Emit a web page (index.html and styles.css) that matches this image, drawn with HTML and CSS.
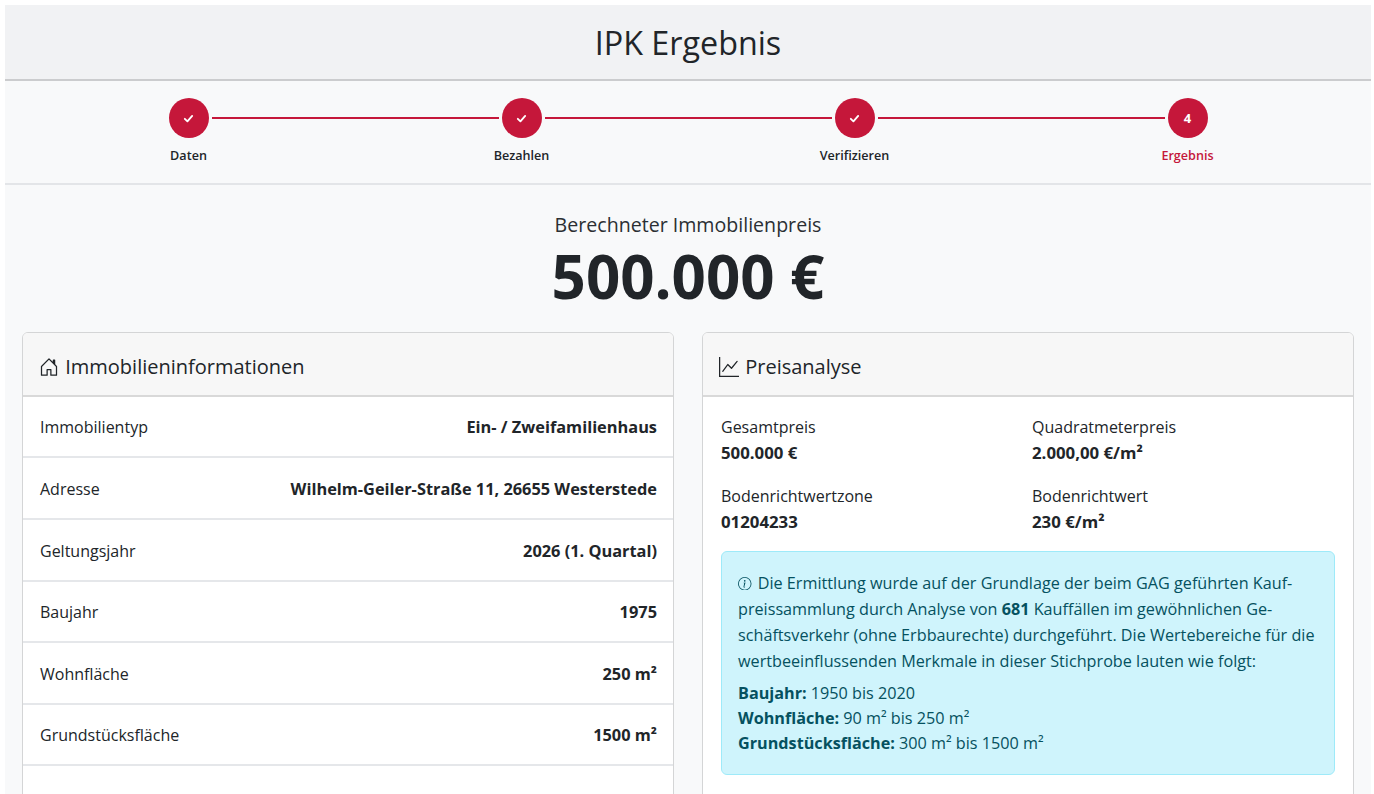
FILE: index.html
```html
<!DOCTYPE html>
<html lang="de">
<head>
<meta charset="utf-8">
<title>IPK Ergebnis</title>
<link rel="stylesheet" href="styles.css">
</head>
<body>
<div class="page">
  <header class="topbar">
    <h1 class="topbar-title">IPK Ergebnis</h1>
  </header>

  <nav class="stepper">
    <ol class="steps">
      <li class="step step-done">
        <span class="step-dot"><svg class="check" viewBox="0 0 12 12"><polyline points="2.6,6.3 5,8.6 9.4,3.6"/></svg></span>
        <span class="step-label">Daten</span>
      </li>
      <li class="step step-done">
        <span class="step-dot"><svg class="check" viewBox="0 0 12 12"><polyline points="2.6,6.3 5,8.6 9.4,3.6"/></svg></span>
        <span class="step-label">Bezahlen</span>
      </li>
      <li class="step step-done">
        <span class="step-dot"><svg class="check" viewBox="0 0 12 12"><polyline points="2.6,6.3 5,8.6 9.4,3.6"/></svg></span>
        <span class="step-label">Verifizieren</span>
      </li>
      <li class="step step-current">
        <span class="step-dot">4</span>
        <span class="step-label">Ergebnis</span>
      </li>
    </ol>
  </nav>

  <main class="content">
    <section class="result">
      <p class="result-label">Berechneter Immobilienpreis</p>
      <p class="result-value">500.000 €</p>
    </section>

    <div class="cards">
      <section class="card">
        <h2 class="card-header"><svg class="icon" viewBox="0 0 16 16"><path d="M8.354 1.146a.5.5 0 0 0-.708 0l-6 6A.5.5 0 0 0 1.5 7.5v7a.5.5 0 0 0 .5.5h4.5a.5.5 0 0 0 .5-.5v-4h2v4a.5.5 0 0 0 .5.5H14a.5.5 0 0 0 .5-.5v-7a.5.5 0 0 0-.146-.354L13 5.793V2.5a.5.5 0 0 0-.5-.5h-1a.5.5 0 0 0-.5.5v1.293zM2.5 14V7.707l5.5-5.5 5.5 5.5V14H10v-4a.5.5 0 0 0-.5-.5h-3a.5.5 0 0 0-.5.5v4z"/></svg> Immobilieninformationen</h2>
        <ul class="info-list">
          <li class="info-row"><span class="info-key">Immobilientyp</span><span class="info-value">Ein- / Zweifamilienhaus</span></li>
          <li class="info-row"><span class="info-key">Adresse</span><span class="info-value">Wilhelm-Geiler-Straße 11, 26655 Westerstede</span></li>
          <li class="info-row"><span class="info-key">Geltungsjahr</span><span class="info-value">2026 (1. Quartal)</span></li>
          <li class="info-row"><span class="info-key">Baujahr</span><span class="info-value">1975</span></li>
          <li class="info-row"><span class="info-key">Wohnfläche</span><span class="info-value">250 m²</span></li>
          <li class="info-row"><span class="info-key">Grundstücksfläche</span><span class="info-value">1500 m²</span></li>
          <li class="info-row info-row-empty"></li>
        </ul>
      </section>

      <section class="card">
        <h2 class="card-header"><svg class="icon" viewBox="0 0 16 16"><path fill-rule="evenodd" d="M0 0h1v15h15v1H0zm14.817 3.113a.5.5 0 0 1 .07.704l-4.5 5.5a.5.5 0 0 1-.74.037L7.060 6.767l-3.656 5.027a.5.5 0 0 1-.808-.588l4-5.5a.5.5 0 0 1 .758-.06l2.609 2.61 4.150-5.073a.5.5 0 0 1 .704-.07"/></svg> Preisanalyse</h2>
        <div class="card-body">
          <dl class="stats">
            <div class="stat"><dt class="stat-key">Gesamtpreis</dt><dd class="stat-value">500.000 €</dd></div>
            <div class="stat"><dt class="stat-key">Quadratmeterpreis</dt><dd class="stat-value">2.000,00 €/m²</dd></div>
            <div class="stat"><dt class="stat-key">Bodenrichtwertzone</dt><dd class="stat-value">01204233</dd></div>
            <div class="stat"><dt class="stat-key">Bodenrichtwert</dt><dd class="stat-value">230 €/m²</dd></div>
          </dl>

          <div class="alert">
            <p class="alert-text">
              <span class="alert-line"><svg class="info-icon" viewBox="0 0 16 16"><path d="M8 15A7 7 0 1 1 8 1a7 7 0 0 1 0 14m0 1A8 8 0 1 0 8 0a8 8 0 0 0 0 16"/><path d="m8.93 6.588-2.29.287-.082.38.45.083c.294.07.352.176.288.469l-.738 3.468c-.194.897.105 1.319.808 1.319.545 0 .943-.252 1.128-.598l.088-.416c-.2.176-.492.246-.686.246-.275 0-.375-.193-.304-.533zM9 4.5a1 1 0 1 1-2 0 1 1 0 0 1 2 0"/></svg> Die Ermittlung wurde auf der Grundlage der beim GAG geführten Kauf-</span>
              <span class="alert-line">preissammlung durch Analyse von <strong>681</strong> Kauffällen im gewöhnlichen Ge-</span>
              <span class="alert-line">schäftsverkehr (ohne Erbbaurechte) durchgeführt. Die Wertebereiche für die</span>
              <span class="alert-line">wertbeeinflussenden Merkmale in dieser Stichprobe lauten wie folgt:</span>
            </p>
            <ul class="ranges">
              <li><strong>Baujahr:</strong> 1950 bis 2020</li>
              <li><strong>Wohnfläche:</strong> 90 m² bis 250 m²</li>
              <li><strong>Grundstücksfläche:</strong> 300 m² bis 1500 m²</li>
            </ul>
          </div>
        </div>
      </section>
    </div>
  </main>
</div>
</body>
</html>
```

FILE: styles.css
```css
* { box-sizing: border-box; }

html, body {
  margin: 0;
  padding: 0;
  background: #ffffff;
}

body {
  font-family: "Open Sans", "Noto Sans", sans-serif;
  color: #212529;
  font-size: 16px;
}

.page {
  margin: 5px 3px 0 5px;
  background: #f8f9fa;
  min-height: 900px;
}

/* Header */
.topbar {
  background: #f1f2f4;
  border-bottom: 2px solid #cbccce;
  padding: 18px 0 17.6px;
  text-align: center;
}

.topbar-title {
  margin: 0;
  font-size: 32.3px;
  font-weight: 400;
  line-height: 38.4px;
  color: #212529;
}

/* Stepper */
.stepper {
  background: #f8f9fa;
  border-bottom: 2px solid #e3e5e8;
  padding: 17px 17px 18.4px;
}

.steps {
  list-style: none;
  margin: 0;
  padding: 0;
  display: grid;
  grid-template-columns: repeat(4, 1fr);
}

.step {
  position: relative;
  display: flex;
  flex-direction: column;
  align-items: center;
}

.step:not(:last-child)::after {
  content: "";
  position: absolute;
  top: 19px;
  left: calc(50% + 23px);
  right: calc(-50% + 23px);
  height: 2px;
  background: #c5173a;
}

.step-dot {
  width: 40px;
  height: 40px;
  border-radius: 50%;
  background: #c5173a;
  color: #ffffff;
  display: flex;
  align-items: center;
  justify-content: center;
  font-size: 13px;
  font-weight: 700;
}

.check {
  width: 13px;
  height: 13px;
  fill: none;
  stroke: #ffffff;
  stroke-width: 1.7;
  stroke-linecap: round;
  stroke-linejoin: round;
}

.step-label {
  margin-top: 8.6px;
  font-size: 12.6px;
  line-height: 18px;
  font-weight: 600;
  color: #212529;
}

.step-current .step-label {
  color: #c5173a;
}

/* Content */
.content {
  padding: 0 17px;
}

.result {
  text-align: center;
  padding-top: 24.8px;
}

.result-label {
  margin: 0;
  font-size: 19.6px;
  line-height: 29.4px;
  color: #2b2f33;
}

.result-value {
  margin: 1.6px 0 0;
  font-size: 60px;
  line-height: 70px;
  font-weight: 700;
  color: #212529;
}

.cards {
  margin-top: 21px;
  display: grid;
  grid-template-columns: 1fr 1fr;
  column-gap: 28px;
}

.card {
  background: #ffffff;
  border: 1px solid #d4d5d6;
  border-radius: 6px;
  overflow: hidden;
}

.card-header {
  margin: 0;
  background: #f7f7f7;
  border-bottom: 2px solid #d9d9d9;
  padding: 19px 16px 13px;
  font-size: 20px;
  line-height: 30px;
  font-weight: 400;
  color: #212529;
}

.icon {
  width: 20px;
  height: 20px;
  fill: #212529;
  vertical-align: -0.15em;
  margin-right: 1px;
}

/* Info list */
.info-list {
  list-style: none;
  margin: 0;
  padding: 0;
}

.info-row {
  display: flex;
  justify-content: space-between;
  align-items: baseline;
  padding: 18.6px 16px 17px 17px;
  line-height: 24px;
  border-bottom: 2px solid #e5e7ea;
  min-height: 61.6px;
}

.info-value {
  font-weight: 700;
  font-size: 16.35px;
}

/* Price analysis */
.card-body {
  padding: 17.8px 18px 18px;
}

.stats {
  margin: 0;
  display: grid;
  grid-template-columns: 1fr 1fr;
  column-gap: 8px;
  row-gap: 19px;
  line-height: 25px;
}

.stat-key {
  font-weight: 400;
}

.stat-value {
  margin: 0;
  font-weight: 700;
  font-size: 16.8px;
}

.alert {
  margin-top: 17px;
  background: #cff4fc;
  border: 1px solid #9eeaf9;
  border-radius: 6px;
  padding: 18px 16px 18px;
  color: #055160;
  font-size: 16.2px;
}

.alert-text {
  margin: 0;
  line-height: 26px;
}

.alert-line {
  display: block;
  white-space: nowrap;
}

.alert-text strong,
.ranges strong {
  font-weight: 700;
}

.info-icon {
  width: 13.5px;
  height: 13.5px;
  fill: #055160;
  vertical-align: -0.1em;
  margin-right: 2px;
}

.ranges {
  list-style: none;
  margin: 7.5px 0 0;
  padding: 0;
  line-height: 25px;
}
```
